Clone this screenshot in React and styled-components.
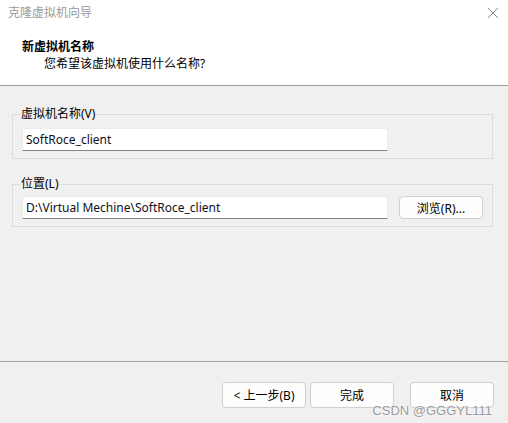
import React from 'react';
import styled, { createGlobalStyle } from 'styled-components';

const GlobalStyle = createGlobalStyle`
  html, body {
    margin: 0;
    padding: 0;
    background: #f0f0f0;
  }
  body {
    font-family: "Noto Sans", "Noto Sans CJK SC", sans-serif;
    font-size: 12px;
    color: #000;
  }
`;

const Window = styled.div`
  position: relative;
  width: 508px;
  height: 423px;
  display: flex;
  flex-direction: column;
  background: #f0f0f0;
  overflow: hidden;
`;

const TitleBar = styled.div`
  height: 28px;
  flex: none;
  display: flex;
  align-items: center;
  justify-content: space-between;
  padding: 0 9px 0 8px;
  background: #fff;
`;

const Title = styled.span`
  color: #9a9a9a;
  font-size: 12px;
  line-height: 16px;
  margin-top: -2px;
`;

const CloseIcon = styled.svg`
  width: 12px;
  height: 12px;
  margin-top: -3px;
`;

const Header = styled.div`
  height: 58px;
  flex: none;
  box-sizing: border-box;
  background: #fff;
  border-bottom: 1px solid #a0a0a0;
  padding: 10px 0 0 22px;
`;

const HeaderTitle = styled.div`
  font-weight: bold;
  line-height: 17px;
`;

const HeaderSub = styled.div`
  padding-left: 22px;
  line-height: 18px;
`;

const Content = styled.div`
  flex: 1;
  display: flex;
  flex-direction: column;
  gap: 17px;
  padding: 20px 15px 0 12px;
`;

const Group = styled.fieldset`
  margin: 0;
  padding: ${(p) => p.$top}px 9px 7px 9px;
  border: 1px solid #dcdcdc;
  min-width: 0;
`;

const Legend = styled.legend`
  padding: 0 1px;
  margin-left: -2px;
  line-height: 16px;
`;

const Row = styled.div`
  display: flex;
  align-items: center;
  gap: 11px;
`;

const Field = styled.div`
  width: 366px;
  height: 23px;
  box-sizing: border-box;
  display: flex;
  align-items: center;
  padding: 0 3px 1px;
  background: #fff;
  border: 1px solid #ececec;
  border-bottom: 1px solid #868686;
  border-radius: 3px 3px 0 0;
  color: #101020;
`;

const Button = styled.div`
  width: ${(p) => p.$w || 84}px;
  height: ${(p) => p.$h || 26}px;
  box-sizing: border-box;
  display: flex;
  align-items: center;
  justify-content: center;
  background: #fdfdfd;
  border: 1px solid #d0d0d0;
  border-radius: 4px;
  color: #000;
`;

const Footer = styled.div`
  height: 62px;
  flex: none;
  box-sizing: border-box;
  border-top: 1px solid #a0a0a0;
  display: flex;
  justify-content: flex-end;
  gap: 4px;
  padding: 20px 14px 0 0;
`;

const Spacer = styled.div`
  width: 8px;
`;

const Watermark = styled.div`
  position: absolute;
  right: 16px;
  bottom: 5px;
  font-family: "Liberation Sans", Arial, sans-serif;
  font-size: 13px;
  color: #9a9a9a;
  text-shadow: 0 0 2px #fff, 0 0 1px #fff;
`;

export default function App() {
  return (
    <>
      <GlobalStyle />
      <Window>
        <TitleBar>
          <Title>克隆虚拟机向导</Title>
          <CloseIcon viewBox="0 0 12 12">
            <path d="M1 1 L11 11 M11 1 L1 11" stroke="#8a8a8a" strokeWidth="1" fill="none" />
          </CloseIcon>
        </TitleBar>
        <Header>
          <HeaderTitle>新虚拟机名称</HeaderTitle>
          <HeaderSub>您希望该虚拟机使用什么名称?</HeaderSub>
        </Header>
        <Content>
          <Group $top={6}>
            <Legend>虚拟机名称(V)</Legend>
            <Row>
              <Field>SoftRoce_client</Field>
            </Row>
          </Group>
          <Group $top={4}>
            <Legend>位置(L)</Legend>
            <Row>
              <Field>D:\Virtual Mechine\SoftRoce_client</Field>
              <Button $w={84} $h={23}>浏览(R)...</Button>
            </Row>
          </Group>
        </Content>
        <Footer>
          <Button>&lt; 上一步(B)</Button>
          <Button>完成</Button>
          <Spacer />
          <Button>取消</Button>
        </Footer>
        <Watermark>CSDN @GGGYL111</Watermark>
      </Window>
    </>
  );
}
